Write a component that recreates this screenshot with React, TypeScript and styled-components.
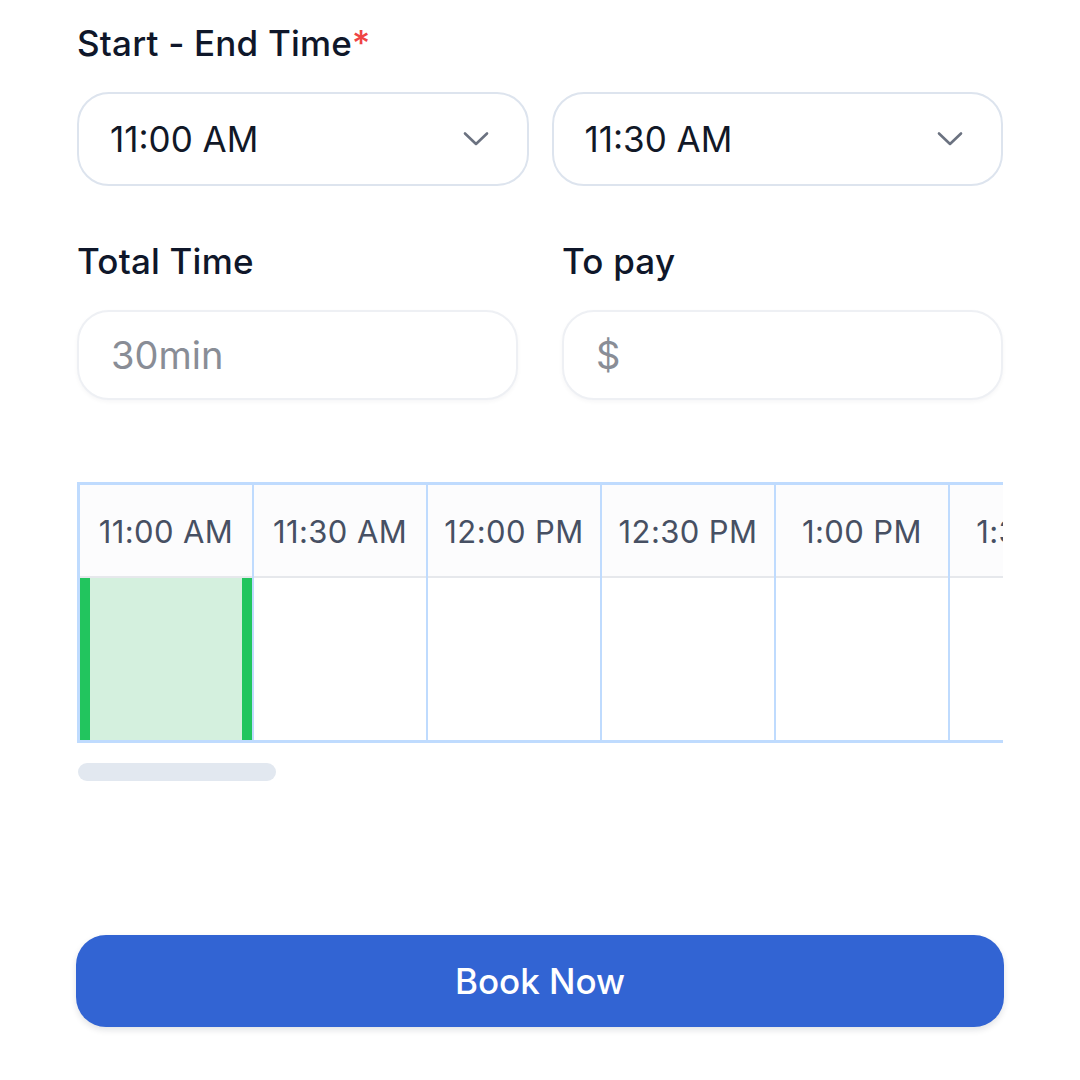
import React from "react";
import styled, { createGlobalStyle } from "styled-components";

const GlobalStyle = createGlobalStyle`
  html, body { margin: 0; padding: 0; background: #ffffff; }
  body { font-family: Inter, "Noto Sans", "Liberation Sans", sans-serif; -webkit-font-smoothing: antialiased; }
  * { box-sizing: border-box; }
`;

const Page = styled.div`
  width: 1080px;
  height: 1080px;
  padding: 23px 77px 0 77px;
  display: flex;
  flex-direction: column;
`;

const Label = styled.div`
  font-size: 35px;
  line-height: 40px;
  font-weight: 500;
  color: #0f172a;
  letter-spacing: 0.2px;
`;

const Req = styled.span`
  color: #ef4444;
`;

const Row = styled.div<{ $gap: number; $mt?: number }>`
  display: grid;
  grid-template-columns: 1fr 1fr;
  column-gap: ${(p) => p.$gap}px;
  margin-top: ${(p) => p.$mt ?? 0}px;
`;

const Field = styled.div`
  display: flex;
  flex-direction: column;
  gap: 29px;
`;

const Select = styled.div`
  height: 94px;
  border: 2px solid #dde4ee;
  border-radius: 32px;
  display: flex;
  align-items: center;
  justify-content: space-between;
  padding: 0 38px 0 31px;
  font-size: 35px;
  color: #111827;
  background: #fff;
`;

const Input = styled.div`
  height: 90px;
  border: 2px solid #eef0f4;
  border-radius: 32px;
  display: flex;
  align-items: center;
  padding: 0 32px;
  font-size: 38px;
  color: #898d96;
  background: #fff;
  box-shadow: 0 2px 4px rgba(15, 23, 42, 0.04);
`;

const TableWrap = styled.div`
  margin-top: 82px;
  width: 926px;
  overflow: hidden;
`;

const Table = styled.div`
  display: flex;
  width: max-content;
  border-top: 3px solid #bfdbfe;
  border-bottom: 3px solid #bfdbfe;
  border-left: 3px solid #bfdbfe;
`;

const Col = styled.div`
  width: 174px;
  flex: none;
  display: flex;
  flex-direction: column;
  border-right: 2px solid #bfdbfe;
`;

const Head = styled.div`
  height: 93px;
  background: #fcfcfd;
  border-bottom: 2px solid #e6e8ec;
  display: flex;
  align-items: center;
  justify-content: center;
  padding-top: 2px;
  font-size: 31px;
  letter-spacing: 0.4px;
  color: #475063;
  white-space: nowrap;
`;

const Cell = styled.div<{ $selected?: boolean }>`
  height: 162px;
  background: ${(p) => (p.$selected ? "#d4f0de" : "#ffffff")};
  border-left: ${(p) => (p.$selected ? "10px solid #22c55e" : "none")};
  border-right: ${(p) => (p.$selected ? "10px solid #22c55e" : "none")};
`;

const Scrollbar = styled.div`
  margin-top: 20px;
  width: 198px;
  height: 18px;
  border-radius: 9px;
  background: #e2e8f0;
  margin-left: 1px;
`;

const Button = styled.button`
  margin-top: 154px;
  height: 92px;
  width: 928px;
  margin-left: -1px;
  border: none;
  border-radius: 30px;
  background: #3264d3;
  color: #ffffff;
  font-family: inherit;
  font-size: 35px;
  font-weight: 500;
  box-shadow: 0 3px 6px rgba(15, 23, 42, 0.12);
`;

const Chevron = () => (
  <svg width="26" height="16" viewBox="0 0 26 16" fill="none">
    <polyline points="2,2.5 13,13 24,2.5" stroke="#6b7280" strokeWidth="2.6" strokeLinecap="round" strokeLinejoin="round" />
  </svg>
);

const slots = ["11:00 AM", "11:30 AM", "12:00 PM", "12:30 PM", "1:00 PM", "1:30 PM", "2:00 PM"];

export default function App() {
  return (
    <>
      <GlobalStyle />
      <Page>
        <Field>
          <Label>
            Start - End Time<Req>*</Req>
          </Label>
          <Row $gap={23}>
            <Select>
              <span>11:00 AM</span>
              <Chevron />
            </Select>
            <Select>
              <span>11:30 AM</span>
              <Chevron />
            </Select>
          </Row>
        </Field>
        <Row $gap={44} $mt={55}>
          <Field>
            <Label>Total Time</Label>
            <Input>30min</Input>
          </Field>
          <Field>
            <Label>To pay</Label>
            <Input>$</Input>
          </Field>
        </Row>
        <TableWrap>
          <Table>
            {slots.map((s, i) => (
              <Col key={s}>
                <Head>{s}</Head>
                <Cell $selected={i === 0} />
              </Col>
            ))}
          </Table>
        </TableWrap>
        <Scrollbar />
        <Button>Book Now</Button>
      </Page>
    </>
  );
}
